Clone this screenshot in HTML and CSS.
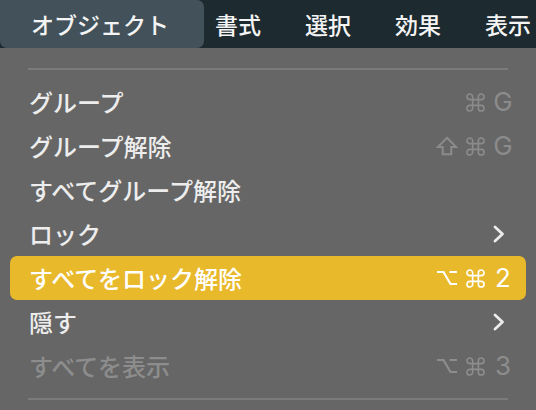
FILE: index.html
```html
<!DOCTYPE html>
<html lang="ja">
<head>
<meta charset="utf-8">
<title>Menu</title>
<link rel="stylesheet" href="styles.css">
</head>
<body>
<div class="screen">
  <nav class="bar">
    <div class="bar-item active">オブジェクト</div>
    <div class="bar-item">書式</div>
    <div class="bar-item">選択</div>
    <div class="bar-item">効果</div>
    <div class="bar-item">表示</div>
  </nav>
  <div class="menu">
    <div class="sep"></div>
    <ul class="items">
      <li class="item">
        <span class="label">グループ</span>
        <span class="keys dim">
          <span class="k"></span>
          <span class="k"><svg width="19" height="19" viewBox="0 0 20 20"><path d="M7 7 V4 A3 3 0 1 0 4 7 H16 A3 3 0 1 0 13 4 V16 A3 3 0 1 0 16 13 H4 A3 3 0 1 0 7 16 Z" fill="none" stroke="currentColor" stroke-width="1.7"/></svg></span>
          <span class="k">G</span>
        </span>
      </li>
      <li class="item">
        <span class="label">グループ解除</span>
        <span class="keys dim">
          <span class="k"><svg width="22" height="20" viewBox="0 0 22 20"><path d="M11 1.8 L20.2 11 H15.3 V18.2 H6.7 V11 H1.8 Z" fill="none" stroke="currentColor" stroke-width="2" stroke-linejoin="miter"/></svg></span>
          <span class="k"><svg width="19" height="19" viewBox="0 0 20 20"><path d="M7 7 V4 A3 3 0 1 0 4 7 H16 A3 3 0 1 0 13 4 V16 A3 3 0 1 0 16 13 H4 A3 3 0 1 0 7 16 Z" fill="none" stroke="currentColor" stroke-width="1.7"/></svg></span>
          <span class="k">G</span>
        </span>
      </li>
      <li class="item">
        <span class="label">すべてグループ解除</span>
      </li>
      <li class="item">
        <span class="label">ロック</span>
        <svg class="chev" width="12" height="18" viewBox="0 0 12 18"><path d="M2 2 L9.5 9 L2 16" fill="none" stroke="currentColor" stroke-width="2.8" stroke-linecap="round" stroke-linejoin="round"/></svg>
      </li>
      <li class="item selected">
        <span class="label">すべてをロック解除</span>
        <span class="keys">
          <span class="k"><svg width="22" height="16" viewBox="0 0 22 16"><path d="M1 2 H7.5 L14.5 14 H21 M13.5 2 H21" fill="none" stroke="currentColor" stroke-width="2.2"/></svg></span>
          <span class="k"><svg width="19" height="19" viewBox="0 0 20 20"><path d="M7 7 V4 A3 3 0 1 0 4 7 H16 A3 3 0 1 0 13 4 V16 A3 3 0 1 0 16 13 H4 A3 3 0 1 0 7 16 Z" fill="none" stroke="currentColor" stroke-width="1.7"/></svg></span>
          <span class="k">2</span>
        </span>
      </li>
      <li class="item">
        <span class="label">隠す</span>
        <svg class="chev" width="12" height="18" viewBox="0 0 12 18"><path d="M2 2 L9.5 9 L2 16" fill="none" stroke="currentColor" stroke-width="2.8" stroke-linecap="round" stroke-linejoin="round"/></svg>
      </li>
      <li class="item disabled">
        <span class="label">すべてを表示</span>
        <span class="keys">
          <span class="k"><svg width="22" height="16" viewBox="0 0 22 16"><path d="M1 2 H7.5 L14.5 14 H21 M13.5 2 H21" fill="none" stroke="currentColor" stroke-width="2.2"/></svg></span>
          <span class="k"><svg width="19" height="19" viewBox="0 0 20 20"><path d="M7 7 V4 A3 3 0 1 0 4 7 H16 A3 3 0 1 0 13 4 V16 A3 3 0 1 0 16 13 H4 A3 3 0 1 0 7 16 Z" fill="none" stroke="currentColor" stroke-width="1.7"/></svg></span>
          <span class="k">3</span>
        </span>
      </li>
    </ul>
    <div class="sep"></div>
  </div>
</div>
</body>
</html>
```
FILE: styles.css
```css
html, body {
  margin: 0;
  padding: 0;
}
body {
  width: 536px;
  height: 410px;
  overflow: hidden;
  background: #666666;
  font-family: "Inter", "Noto Sans CJK JP", sans-serif;
}
.screen {
  width: 536px;
  height: 410px;
  display: flex;
  flex-direction: column;
}
.bar {
  height: 48px;
  flex: none;
  background: #1d2a30;
  display: flex;
  align-items: stretch;
  white-space: nowrap;
  overflow: hidden;
}
.bar-item {
  display: flex;
  align-items: center;
  color: #f4f4f4;
  font-size: 23px;
  font-weight: 500;
  font-family: "Noto Sans CJK JP", sans-serif;
  flex: none;
}
.bar-item + .bar-item {
  margin-left: 44px;
}
.bar-item.active {
  background: #43525a;
  padding: 0 35px 0 31px;
  border-top-right-radius: 7px;
  border-bottom-right-radius: 7px;
  border-bottom-left-radius: 7px;
}
.active + .bar-item {
  margin-left: 11px;
}
.menu {
  flex: 1;
  padding: 20px 0 0 0;
}
.sep {
  height: 2px;
  background: #7b7b7b;
  margin: 0 28px 0 28px;
}
.items {
  list-style: none;
  margin: 0;
  padding: 10px 10px;
}
.item {
  height: 44px;
  display: flex;
  align-items: center;
  justify-content: space-between;
  padding: 0 12px 0 19px;
  border-radius: 7px;
  color: #ededed;
  font-family: "Noto Sans CJK JP", sans-serif;
  font-size: 24px;
  font-weight: 500;
}
.label {
  line-height: 1;
}
.item.selected {
  background: #e9b92c;
  color: #ffffff;
}
.item.disabled {
  color: #8d8d8d;
}
.keys {
  display: flex;
  align-items: center;
  gap: 6px;
  font-family: "Inter", "Liberation Sans", sans-serif;
  font-size: 26px;
  font-weight: 400;
}
.keys.dim {
  color: #8b8b8b;
}
.k {
  width: 22px;
  height: 24px;
  display: flex;
  align-items: center;
  justify-content: center;
  line-height: 1;
}
.k svg {
  display: block;
}
.chev {
  margin-right: 9px;
  color: #ececec;
}
```
